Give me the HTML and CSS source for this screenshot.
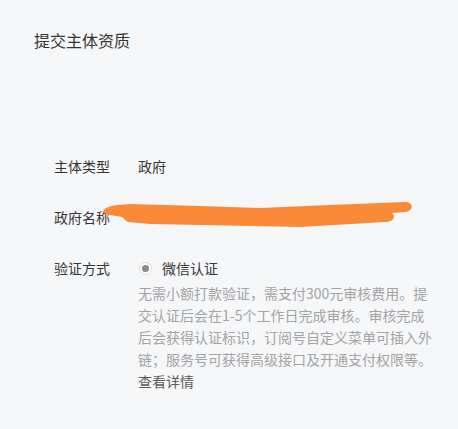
FILE: index.html
```html
<!DOCTYPE html>
<html lang="zh-CN">
<head>
<meta charset="utf-8">
<title>提交主体资质</title>
<link rel="stylesheet" href="styles.css">
</head>
<body>
<div class="page">
  <h1 class="title">提交主体资质</h1>
  <div class="form">
    <div class="row">
      <div class="label">主体类型</div>
      <div class="value">政府</div>
    </div>
    <div class="row">
      <div class="label">政府名称</div>
      <div class="value"></div>
    </div>
    <div class="row">
      <div class="label">验证方式</div>
      <div class="value">
        <label class="radio"><span class="radio-dot"></span><span>微信认证</span></label>
        <p class="desc">无需小额打款验证，需支付300元审核费用。提<br>交认证后会在1-5个工作日完成审核。审核完成<br>后会获得认证标识，订阅号自定义菜单可插入外<br>链；服务号可获得高级接口及开通支付权限等。<br><a class="more">查看详情</a></p>
      </div>
    </div>
  </div>
  <svg class="scribble" width="458" height="429" viewBox="0 0 458 429" aria-hidden="true">
    <path d="M103,211 C106,206 115,205 130,204 L200,206 L260,208 L330,205 L405,202 C414,202 414,211 405,212 L392,213 C396,216 394,222 385,222 L300,227 L200,225 L150,224 L128,222 C124,220 124,218 122,217 L110,215 C104,214 102,212 103,211 Z" fill="#fb8a38"/>
  </svg>
</div>
</body>
</html>
```

FILE: styles.css
```css
html, body {
  margin: 0;
  padding: 0;
  background: #f6f7f9;
}
body {
  font-family: "Noto Sans CJK SC", "Noto Sans", sans-serif;
  color: #333;
  width: 458px;
  height: 429px;
  overflow: hidden;
}
.page {
  position: relative;
  padding: 30px 0 0 34px;
  height: 429px;
  box-sizing: border-box;
}
.title {
  margin: 0;
  font-size: 16px;
  font-weight: normal;
  line-height: 20px;
  color: #353535;
}
.form {
  margin: 105px 0 0 20px;
  display: flex;
  flex-direction: column;
  gap: 29px;
}
.row {
  display: flex;
  font-size: 14px;
  line-height: 22px;
}
.label {
  width: 84px;
  flex: none;
  color: #353535;
}
.value {
  color: #353535;
  min-height: 22px;
}
.radio {
  display: flex;
  align-items: center;
  gap: 10px;
  padding-left: 1px;
}
.radio-dot {
  width: 11px;
  height: 11px;
  border: 1px solid #dcdcdc;
  border-radius: 50%;
  background: #fff;
  position: relative;
  flex: none;
}
.radio-dot::after {
  content: "";
  position: absolute;
  left: 2px;
  top: 2px;
  width: 7px;
  height: 7px;
  border-radius: 50%;
  background: #8a8a8a;
}
.desc {
  margin: 3px 0 0;
  color: #a3a3a3;
  white-space: nowrap;
  line-height: 22px;
}
.more {
  color: #5a5a5a;
  text-decoration: none;
}
.scribble {
  position: absolute;
  left: 0;
  top: 0;
  pointer-events: none;
}
```
